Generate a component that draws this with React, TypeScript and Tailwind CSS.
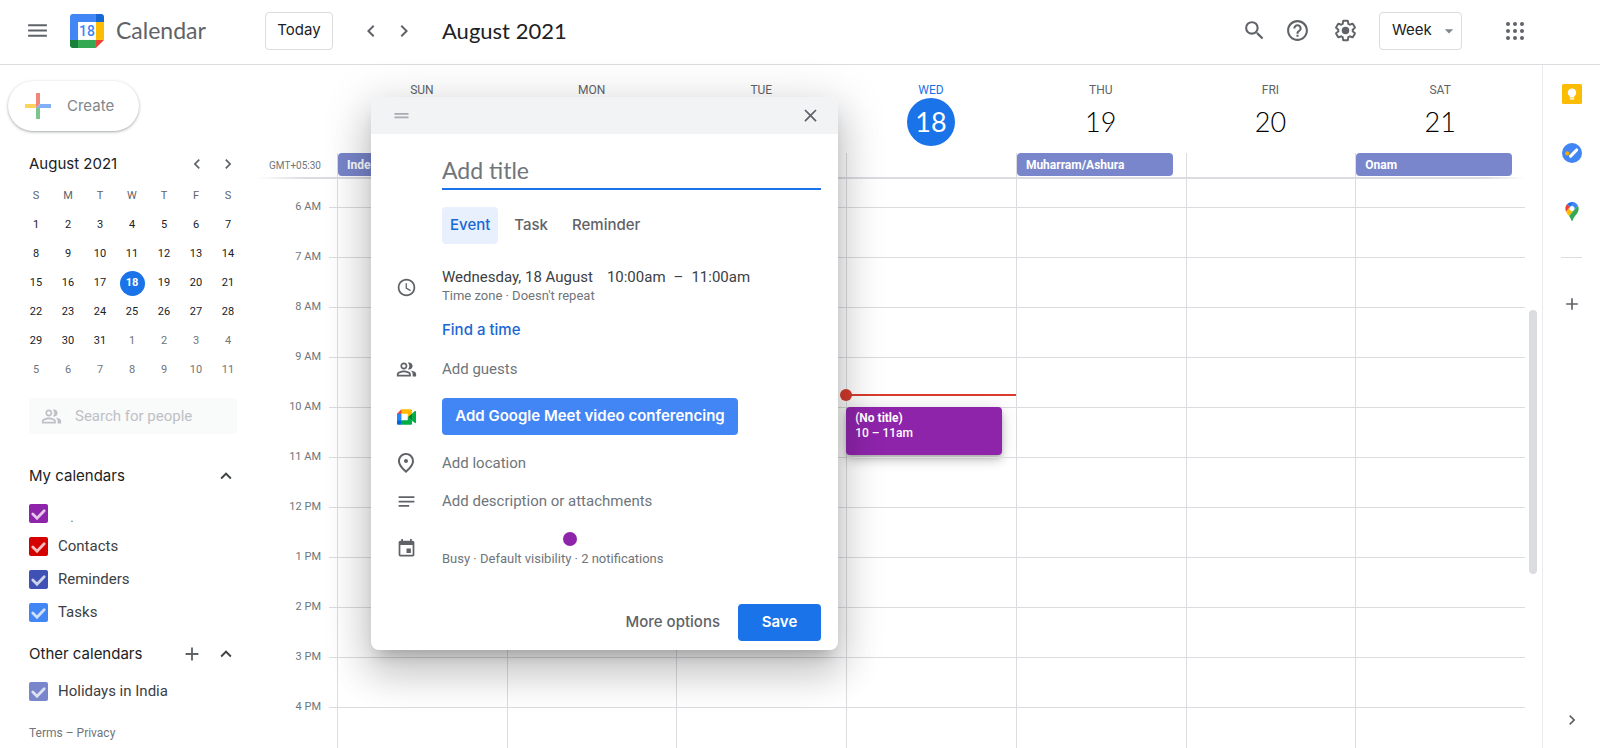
import React, { useState } from 'react';
import {
  MdAccessTime,
  MdAdd,
  MdArrowDropDown,
  MdChevronLeft,
  MdChevronRight,
  MdClose,
  MdDragHandle,
  MdEvent,
  MdExpandLess,
  MdHelpOutline,
  MdMenu,
  MdNotes,
  MdOutlinePeopleAlt,
  MdOutlinePlace,
  MdSearch,
} from 'react-icons/md';

interface Day {
  name: string;
  date: number;
  holiday?: string;
  today?: boolean;
}

interface CalendarEntry {
  label: string;
  color: string;
}

const days: Day[] = [
  { name: 'SUN', date: 15, holiday: 'Independence Day' },
  { name: 'MON', date: 16 },
  { name: 'TUE', date: 17 },
  { name: 'WED', date: 18, today: true },
  { name: 'THU', date: 19, holiday: 'Muharram/Ashura' },
  { name: 'FRI', date: 20 },
  { name: 'SAT', date: 21, holiday: 'Onam' },
];

const hours = ['6 AM', '7 AM', '8 AM', '9 AM', '10 AM', '11 AM', '12 PM', '1 PM', '2 PM', '3 PM', '4 PM'];

const weeks = [
  [1, 2, 3, 4, 5, 6, 7],
  [8, 9, 10, 11, 12, 13, 14],
  [15, 16, 17, 18, 19, 20, 21],
  [22, 23, 24, 25, 26, 27, 28],
  [29, 30, 31, 1, 2, 3, 4],
  [5, 6, 7, 8, 9, 10, 11],
];

const myCalendars: CalendarEntry[] = [
  { label: '.', color: 'bg-[#8e24aa]' },
  { label: 'Contacts', color: 'bg-[#d50000]' },
  { label: 'Reminders', color: 'bg-[#3f51b5]' },
  { label: 'Tasks', color: 'bg-[#4285f4]' },
];

const CalendarLogo = () => (
  <svg viewBox="-3.75 -3.75 200 200" className="w-[34px] h-[34px]" aria-hidden="true">
    <path fill="#fff" d="M148.9 43.6H43.6v105.3h105.3z" />
    <path fill="#ea4335" d="M148.882 196.25l47.368-47.368h-47.368z" />
    <path fill="#34a853" d="M43.6 148.882v47.368h105.282v-47.368z" />
    <path fill="#4285f4" d="M12.039-3.75C3.316-3.75-3.75 3.316-3.75 12.039v136.842h47.368V43.618h105.263V-3.75z" />
    <path fill="#188038" d="M-3.75 148.882v31.579c0 8.724 7.066 15.789 15.789 15.789h31.579v-47.368z" />
    <path fill="#fbbc04" d="M148.882 43.618v105.263h47.368V43.618z" />
    <path fill="#1967d2" d="M196.25 43.618V12.039c0-8.724-7.066-15.789-15.789-15.789h-31.579v47.368z" />
    <text x="96" y="125" textAnchor="middle" fontFamily="Roboto, sans-serif" fontWeight="500" fontSize="82" fill="#4285f4">
      18
    </text>
  </svg>
);

const MeetLogo = () => (
  <svg viewBox="0 0 87.5 72" className="w-[19px] h-4" aria-hidden="true">
    <path fill="#fff" d="M20 20h30v32H20z" />
    <path fill="#00832d" d="M49.5 36l8.53 9.75 11.47 7.33 2-17.02-2-16.64-11.69 6.44z" />
    <path fill="#0066da" d="M0 51.5V66c0 3.315 2.685 6 6 6h14.5l3-10.96-3-9.54-9.95-3z" />
    <path fill="#e94235" d="M20.5 0L0 20.5l10.55 3 9.95-3 2.95-9.41z" />
    <path fill="#2684fc" d="M20.5 20.5H0v31h20.5z" />
    <path
      fill="#00ac47"
      d="M82.6 8.68L69.5 19.42v33.66l13.16 10.79c1.97 1.54 4.85.135 4.85-2.37V11c0-2.535-2.945-3.925-4.91-2.32zM49.5 36v15.5h-29V72h43c3.315 0 6-2.685 6-6V53.08z"
    />
    <path fill="#ffba00" d="M63.5 0h-43v20.5h29V36l20-16.57V6c0-3.315-2.685-6-6-6z" />
  </svg>
);

const KeepLogo = () => (
  <svg viewBox="0 0 20 20" className="w-5 h-5" aria-hidden="true">
    <rect width="20" height="20" rx="1.5" fill="#fbbc04" />
    <path fill="#fff" d="M10 4.6a4.1 4.1 0 0 0-2.2 7.6v1.3h4.4v-1.3A4.1 4.1 0 0 0 10 4.6zM7.8 14.3h4.4v1.2H7.8z" />
  </svg>
);

const TasksLogo = () => (
  <svg viewBox="0 0 20 20" className="w-5 h-5" aria-hidden="true">
    <circle cx="10" cy="10" r="10" fill="#4285f4" />
    <path d="M8.6 13.2l6-6.2" stroke="#fff" strokeWidth="3.2" strokeLinecap="round" />
    <circle cx="5.2" cy="10.4" r="2.1" fill="#f9ab00" />
  </svg>
);

const MapsLogo = () => (
  <svg viewBox="0 0 92.3 132.3" className="w-[14px] h-[19px]" aria-hidden="true">
    <path fill="#1a73e8" d="M60.2 2.2C55.8.8 51 0 46.1 0 32 0 19.3 6.4 10.8 16.5l21.8 18.3L60.2 2.2z" />
    <path fill="#ea4335" d="M10.8 16.5C4.1 24.5 0 34.9 0 46.1c0 8.7 1.7 15.7 4.6 22l28-33.3-21.8-18.3z" />
    <path
      fill="#4285f4"
      d="M46.2 28.5c9.8 0 17.7 7.9 17.7 17.7 0 4.3-1.6 8.3-4.2 11.4 0 0 13.9-16.6 27.5-32.7-5.6-10.8-15.3-19-27-22.7L32.6 34.8c3.3-3.8 8.1-6.3 13.6-6.3"
    />
    <path
      fill="#fbbc04"
      d="M46.2 63.8c-9.8 0-17.7-7.9-17.7-17.7 0-4.3 1.5-8.3 4.1-11.3l-28 33.3c4.8 10.6 12.8 19.2 21 29.9l34.1-40.5c-3.3 3.9-8.1 6.3-13.5 6.3"
    />
    <path
      fill="#34a853"
      d="M59.1 109.2c15.4-24.1 33.3-35 33.3-63 0-7.7-1.9-14.9-5.2-21.3L25.6 98c2.6 3.4 5.3 7.3 7.9 11.3 9.4 14.5 6.8 23.1 12.8 23.1s3.4-8.7 12.8-23.2"
    />
  </svg>
);

const CreatePlus = () => (
  <svg viewBox="0 0 26 26" className="w-[26px] h-[26px] opacity-65" aria-hidden="true">
    <path fill="#ea4335" d="M11 0h4v11l-4 4z" />
    <path fill="#fbbc04" d="M0 11h11v4H0z" />
    <path fill="#4285f4" d="M15 11h11v4H11z" />
    <path fill="#34a853" d="M11 15h4v11h-4z" />
  </svg>
);

const AppsIcon = () => (
  <svg viewBox="0 0 18 18" className="w-[18px] h-[18px]" fill="#5f6368" aria-hidden="true">
    {[2, 9, 16].map((y) => [2, 9, 16].map((x) => <circle key={`${x}-${y}`} cx={x} cy={y} r="2" />))}
  </svg>
);

const GearIcon = () => (
  <svg viewBox="0 0 24 24" className="w-[25px] h-[25px]" aria-hidden="true">
    <path
      fill="none"
      stroke="#5f6368"
      strokeWidth="2"
      transform="translate(.84 .84) scale(.93)"
      d="M19.43 12.98c.04-.32.07-.64.07-.98s-.03-.66-.07-.98l2.11-1.65c.19-.15.24-.42.12-.64l-2-3.46c-.12-.22-.39-.3-.61-.22l-2.49 1c-.52-.4-1.08-.73-1.69-.98l-.38-2.65C14.46 2.18 14.25 2 14 2h-4c-.25 0-.46.18-.49.42l-.38 2.65c-.61.25-1.17.59-1.69.98l-2.49-1c-.23-.09-.49 0-.61.22l-2 3.46c-.13.22-.07.49.12.64l2.11 1.65c-.04.32-.07.65-.07.98s.03.66.07.98l-2.11 1.65c-.19.15-.24.42-.12.64l2 3.46c.12.22.39.3.61.22l2.49-1c.52.4 1.08.73 1.69.98l.38 2.65c.03.24.24.42.49.42h4c.25 0 .46-.18.49-.42l.38-2.65c.61-.25 1.17-.59 1.69-.98l2.49 1c.23.09.49 0 .61-.22l2-3.46c.12-.22.07-.49-.12-.64l-2.11-1.65z"
    />
    <circle cx="12" cy="12" r="3.6" fill="#5f6368" />
  </svg>
);

const Header = () => (
  <header className="flex items-center h-[65px] pb-[3px] shrink-0 border-b border-[#dadce0] text-[#5f6368]">
    <button aria-label="Main menu" className="ml-[25px]">
      <MdMenu size={25} />
    </button>
    <div className="ml-5 flex items-center gap-3 w-[195px]">
      <CalendarLogo />
      <span className="font-[Lato,sans-serif] text-[23px] text-[#5f6368]">Calendar</span>
    </div>
    <button className="w-[68px] h-[38px] border border-[#dadce0] rounded font-[Inter,sans-serif] text-[15px] text-[#202124]">
      Today
    </button>
    <div className="ml-[26px] flex items-center gap-[9px]">
      <button aria-label="Previous week">
        <MdChevronLeft size={24} />
      </button>
      <button aria-label="Next week">
        <MdChevronRight size={24} />
      </button>
    </div>
    <h1 className="ml-[26px] font-[Lato,sans-serif] text-[22px] text-[#202124]">August 2021</h1>
    <div className="ml-auto flex items-center">
      <button aria-label="Search">
        <MdSearch size={25} />
      </button>
      <button aria-label="Support" className="ml-[18px]">
        <MdHelpOutline size={25} />
      </button>
      <button aria-label="Settings" className="ml-[23px]">
        <GearIcon />
      </button>
      <div className="relative ml-[21px]">
        <select
          aria-label="View"
          defaultValue="Week"
          className="appearance-none w-[83px] h-[38px] pl-3 border border-[#dadce0] rounded font-[Inter,sans-serif] text-[15px] text-[#202124]"
        >
          <option>Day</option>
          <option>Week</option>
          <option>Month</option>
        </select>
        <MdArrowDropDown size={20} className="absolute right-[3px] top-[9px] pointer-events-none text-[#80868b]" />
      </div>
      <button aria-label="Google apps" className="ml-11 mr-[76px]">
        <AppsIcon />
      </button>
    </div>
  </header>
);

const MiniCalendar = () => (
  <div className="mt-[22px]">
    <div className="flex items-center h-[22px] pl-[29px] pr-[18px]">
      <h2 className="font-[Inter,sans-serif] text-[15px] text-[#202124]">August 2021</h2>
      <div className="ml-auto flex gap-[11px] text-[#5f6368]">
        <button aria-label="Previous month">
          <MdChevronLeft size={20} />
        </button>
        <button aria-label="Next month">
          <MdChevronRight size={20} />
        </button>
      </div>
    </div>
    <table className="mt-[7px] ml-5 w-[224px] table-fixed text-center text-[11px] text-[#202124]">
      <thead>
        <tr className="h-[29px] text-[#5f6368]">
          {['S', 'M', 'T', 'W', 'T', 'F', 'S'].map((d, i) => (
            <th key={i} className="font-normal">
              {d}
            </th>
          ))}
        </tr>
      </thead>
      <tbody>
        {weeks.map((week, w) => (
          <tr key={w} className="h-[29px]">
            {week.map((d) => {
              const today = w === 2 && d === 18;
              const nextMonth = w > 3 && d < 12;
              return (
                <td key={d} className={nextMonth ? 'text-[#70757a]' : ''}>
                  {today ? (
                    <span className="mx-auto flex items-center justify-center w-[25px] h-[25px] rounded-full bg-[#1a73e8] text-white font-bold">
                      {d}
                    </span>
                  ) : (
                    d
                  )}
                </td>
              );
            })}
          </tr>
        ))}
      </tbody>
    </table>
  </div>
);

const CalendarCheckbox: React.FC<CalendarEntry> = ({ label, color }) => (
  <label className="flex items-center h-[33px] pl-[29px] gap-[10px] text-[15px] text-[#3c4043]">
    <span className="grid w-[19px] h-[19px]">
      <input
        type="checkbox"
        defaultChecked
        className={`appearance-none col-start-1 row-start-1 w-[19px] h-[19px] rounded-xs ${color}`}
      />
      <svg viewBox="0 0 19 19" className="col-start-1 row-start-1 pointer-events-none" fill="none" aria-hidden="true">
        <path d="M3.8 10l4.2 4.2 7.2-7.4" stroke="#fff" strokeOpacity=".75" strokeWidth="2.8" strokeLinecap="round" />
      </svg>
    </span>
    <span className={label === '.' ? 'pl-3 pt-2 text-[#80868b]' : ''}>{label}</span>
  </label>
);

const Sidebar = () => (
  <aside className="w-[256px] shrink-0">
    <button className="mt-4 ml-2 flex items-center w-[131px] h-[50px] pl-[17px] gap-4 rounded-full bg-white shadow-[0_1px_2px_rgba(60,64,67,0.3),0_1px_3px_1px_rgba(60,64,67,0.12)] font-[Inter,sans-serif] text-[15px] text-[#80868b]">
      <CreatePlus />
      Create
    </button>
    <MiniCalendar />
    <div className="mt-[13px] ml-[29px] w-[208px] h-9 flex items-center pl-3 gap-[13px] rounded bg-[#f9fafa] text-[#bdc1c6]">
      <MdOutlinePeopleAlt size={21} />
      <input
        aria-label="Search for people"
        placeholder="Search for people"
        className="w-36 bg-transparent text-[15px] placeholder:text-[#bdc1c6] outline-none"
      />
    </div>
    <section className="mt-[30px]">
      <div className="flex items-center h-6 pl-[29px] pr-[19px]">
        <h2 className="font-[Inter,sans-serif] text-[15px] text-[#202124]">My calendars</h2>
        <button aria-label="Collapse my calendars" className="ml-auto text-[#3c4043]">
          <MdExpandLess size={22} />
        </button>
      </div>
      <div className="mt-[9px] pb-[13px]">
        {myCalendars.map((c) => (
          <CalendarCheckbox key={c.label} {...c} />
        ))}
      </div>
    </section>
    <section>
      <div className="flex items-center h-6 pl-[29px] pr-[19px]">
        <h2 className="font-[Inter,sans-serif] text-[15px] text-[#202124]">Other calendars</h2>
        <button aria-label="Add other calendars" className="ml-auto text-[#5f6368]">
          <MdAdd size={22} />
        </button>
        <button aria-label="Collapse other calendars" className="ml-3 text-[#3c4043]">
          <MdExpandLess size={22} />
        </button>
      </div>
      <div className="mt-[9px]">
        <CalendarCheckbox label="Holidays in India" color="bg-[#7986cb]" />
      </div>
    </section>
    <p className="mt-4 pl-[29px] text-[12px] text-[#70757a]">
      <a href="#terms">Terms</a> – <a href="#privacy">Privacy</a>
    </p>
  </aside>
);

const WeekGrid = () => (
  <main className="flex-1 min-w-0 flex">
    <div className="flex-1 min-w-0 flex flex-col">
      {/* Day names, dates and all-day events */}
      <div className="flex h-[112px] shrink-0">
        <div className="w-[81px] flex items-end justify-end pr-4 pb-1 text-[10px] text-[#70757a]">GMT+05:30</div>
        {days.map((day) => (
          <div key={day.name} className="flex-1 min-w-0 pt-4 flex flex-col">
            <span className={`h-[17px] text-center text-[12px] ${day.today ? 'text-[#1a73e8]' : 'text-[#5f6368]'}`}>
              {day.name}
            </span>
            <span
              className={`mx-auto flex items-center justify-center w-12 h-12 rounded-full font-[Lato,sans-serif] text-[27px] ${
                day.today ? 'bg-[#1a73e8] text-white' : 'font-light text-black'
              }`}
            >
              {day.date}
            </span>
            <div className="mt-[7px] flex-1 border-l border-[#dadce0]">
              {day.holiday && (
                <button className="block w-[calc(100%-13px)] h-[23px] pl-[9px] rounded bg-[#7986cb] text-left text-[12px] font-bold text-white truncate">
                  {day.holiday}
                </button>
              )}
            </div>
          </div>
        ))}
      </div>
      <div className="h-[2px] shrink-0 bg-[linear-gradient(to_right,transparent,#dadce0_50px,#dadce0_calc(100%-40px),transparent)]" />
      {/* Hour grid */}
      <div className="flex-1 min-h-0 flex overflow-hidden">
        <div className="w-[81px] pt-[3px]">
          {hours.map((hour) => (
            <div key={hour} className="h-[50px] flex items-center justify-end gap-2 text-[11px] text-[#70757a]">
              {hour}
              <span className="w-2 h-px bg-[#dadce0]" />
            </div>
          ))}
        </div>
        {days.map((day) => (
          <div key={day.name} className="flex-1 min-w-0 border-l border-[#dadce0]">
            <div className="h-7" />
            {hours.map((hour) => (
              <div key={hour} className="relative h-[50px] border-t border-[#dadce0]">
                {day.today && hour === '10 AM' && (
                  <>
                    <div className="absolute left-0 right-0 -top-[14px] h-[2px] bg-[#db3b2f]" />
                    <div className="absolute -left-[7px] -top-[19px] w-3 h-3 rounded-full bg-[#d33b2d]" />
                    <button className="absolute -left-px -top-px w-[calc(100%-13px)] h-12 pl-[9px] pb-[10px] rounded bg-[#8e24aa] text-left text-[12px] leading-[15px] text-white shadow-[0_6px_10px_rgba(0,0,0,0.14),0_1px_18px_rgba(0,0,0,0.12),0_3px_5px_-1px_rgba(0,0,0,0.2)]">
                      <span className="block font-bold">(No title)</span>
                      <span className="block font-medium">10 – 11am</span>
                    </button>
                  </>
                )}
              </div>
            ))}
          </div>
        ))}
      </div>
    </div>
    {/* Scrollbar */}
    <div className="w-[17px] pl-1 pt-[245px]">
      <div className="w-2 h-[264px] rounded-full bg-[#dadce0]" />
    </div>
  </main>
);

const SidePanel = () => (
  <nav className="w-[58px] shrink-0 border-l border-[#e8eaed] flex flex-col items-center text-[#5f6368]">
    <button aria-label="Keep" className="mt-[19px]">
      <KeepLogo />
    </button>
    <button aria-label="Tasks" className="mt-[39px]">
      <TasksLogo />
    </button>
    <button aria-label="Maps" className="mt-[39px]">
      <MapsLogo />
    </button>
    <hr className="mt-9 w-[21px] border-[#dadce0]" />
    <button aria-label="Get add-ons" className="mt-9">
      <MdAdd size={20} />
    </button>
    <button aria-label="Hide side panel" className="mt-auto mb-[18px]">
      <MdChevronRight size={20} />
    </button>
  </nav>
);

const tabs = ['Event', 'Task', 'Reminder'];

const EventDialog = () => {
  const [tab, setTab] = useState('Event');

  return (
    <div
      role="dialog"
      aria-label="New event"
      className="absolute left-[371px] top-[97px] w-[467px] rounded-lg overflow-hidden bg-white text-[15px] text-[#3c4043] shadow-[0_24px_38px_3px_rgba(0,0,0,0.14),0_9px_46px_8px_rgba(0,0,0,0.12),0_11px_15px_-7px_rgba(0,0,0,0.2)]"
    >
      <div className="h-[37px] flex items-center justify-between pl-5 pr-[17px] bg-[#f1f3f4]">
        <MdDragHandle size={21} className="text-[#a8acb1]" />
        <button aria-label="Close" className="text-[#5f6368]">
          <MdClose size={21} />
        </button>
      </div>

      <form className="pt-5 pr-[17px] pb-[9px]" onSubmit={(e) => e.preventDefault()}>
        <div className="pl-[71px]">
          <input
            aria-label="Title"
            autoFocus
            placeholder="Add title"
            className="block w-full h-9 pb-[3px] border-b-2 border-[#1a73e8] font-[Lato,sans-serif] text-[23px] placeholder:text-[#70757a] outline-none"
          />
          <div className="mt-[17px] flex gap-2 font-[Inter,sans-serif] font-medium">
            {tabs.map((t) => (
              <button
                key={t}
                type="button"
                onClick={() => setTab(t)}
                className={`h-[37px] px-2 rounded ${t === tab ? 'bg-[#e8f0fe] text-[#1967d2]' : 'text-[#5f6368]'}`}
              >
                {t}
              </button>
            ))}
          </div>
        </div>

        <div className="mt-6 flex items-center">
          <span className="w-[71px] pl-[25px] text-[#5f6368]">
            <MdAccessTime size={21} />
          </span>
          <div>
            <div className="flex leading-[18px]">
              <button type="button">Wednesday, 18 August</button>
              <button type="button" className="ml-[14px]">
                10:00am
              </button>
              <span className="mx-2">–</span>
              <button type="button">11:00am</button>
            </div>
            <button type="button" className="block text-[13px] leading-[20px] text-[#70757a]">
              Time zone · Doesn't repeat
            </button>
          </div>
        </div>

        <button type="button" className="ml-[71px] mt-[13px] block h-[22px] font-[Inter,sans-serif] font-medium text-[#1967d2]">
          Find a time
        </button>

        <label className="mt-[9px] h-[38px] flex items-center">
          <span className="w-[71px] pl-[25px] text-[#5f6368]">
            <MdOutlinePeopleAlt size={21} />
          </span>
          <input aria-label="Add guests" placeholder="Add guests" className="flex-1 placeholder:text-[#70757a] outline-none" />
        </label>

        <div className="mt-[10px] flex items-center">
          <span className="w-[71px] pl-[26px]">
            <MeetLogo />
          </span>
          <button type="button" className="h-[37px] w-[296px] rounded bg-[#4285f4] font-[Inter,sans-serif] font-semibold text-white">
            Add Google Meet video conferencing
          </button>
        </div>

        <label className="mt-[9px] h-[38px] flex items-center">
          <span className="w-[71px] pl-[23px] text-[#5f6368]">
            <MdOutlinePlace size={24} />
          </span>
          <input aria-label="Add location" placeholder="Add location" className="flex-1 placeholder:text-[#70757a] outline-none" />
        </label>

        <label className="h-[38px] flex items-center">
          <span className="w-[71px] pl-[25px] text-[#5f6368]">
            <MdNotes size={21} />
          </span>
          <input
            aria-label="Add description or attachments"
            placeholder="Add description or attachments"
            className="flex-1 placeholder:text-[#70757a] outline-none"
          />
        </label>

        <div className="mt-2 flex items-center">
          <span className="w-[71px] pl-[25px] text-[#5f6368]">
            <MdEvent size={21} />
          </span>
          <div>
            <div className="ml-[121px] my-1 w-[14px] h-[14px] rounded-full bg-[#8e24aa]" />
            <button type="button" className="block text-[13px] leading-[18px] text-[#70757a]">
              Busy · Default visibility · 2 notifications
            </button>
          </div>
        </div>

        <div className="mt-9 flex justify-end items-center gap-[18px] font-[Inter,sans-serif]">
          <button type="button" className="font-medium text-[#5f6368]">
            More options
          </button>
          <button type="submit" className="w-[83px] h-[37px] rounded bg-[#1a73e8] font-semibold text-white">
            Save
          </button>
        </div>
      </form>
    </div>
  );
};

const App: React.FC = () => {
  return (
    <div className="relative h-screen overflow-hidden flex flex-col bg-white font-[Roboto,sans-serif]">
      <Header />
      <div className="flex-1 min-h-0 flex">
        <Sidebar />
        <WeekGrid />
        <SidePanel />
      </div>
      <EventDialog />
    </div>
  );
};

export default App;
